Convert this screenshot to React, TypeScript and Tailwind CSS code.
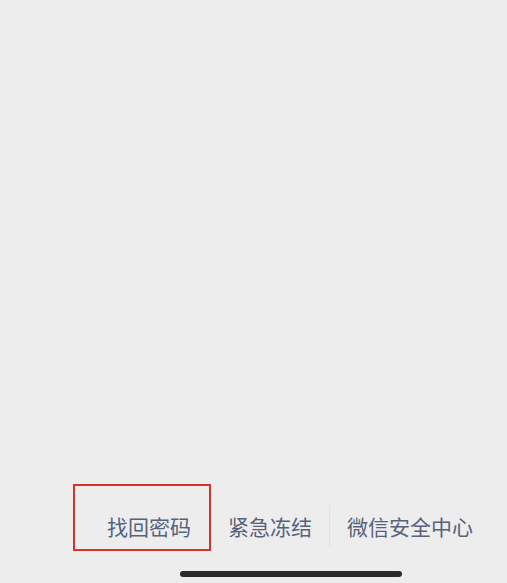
export default function App() {
  return (
    <div
      className="flex h-[583px] w-full flex-col bg-[#ededed]"
      style={{ fontFamily: '"Noto Sans CJK SC", "Noto Sans", sans-serif' }}
    >
      <div className="flex-1" />

      {/* footer links */}
      <div className="relative flex h-[40px] items-center pl-[107px] text-[21px] leading-none text-[#56627e]">
        <div className="absolute left-[73px] top-[-22px] h-[67px] w-[138px] border-2 border-[#d8322c]" />
        <span>找回密码</span>
        <span className="mx-[18px] h-[42px] w-px bg-[#e6e6e6]" />
        <span>紧急冻结</span>
        <span className="mx-[17px] h-[42px] w-px bg-[#e2e2e2]" />
        <span>微信安全中心</span>
      </div>

      {/* home indicator */}
      <div className="flex pl-[180px] pt-[25px] pb-[6px]">
        <div className="h-[6px] w-[222px] rounded-full bg-[#2a2a2a]" />
      </div>
    </div>
  );
}
